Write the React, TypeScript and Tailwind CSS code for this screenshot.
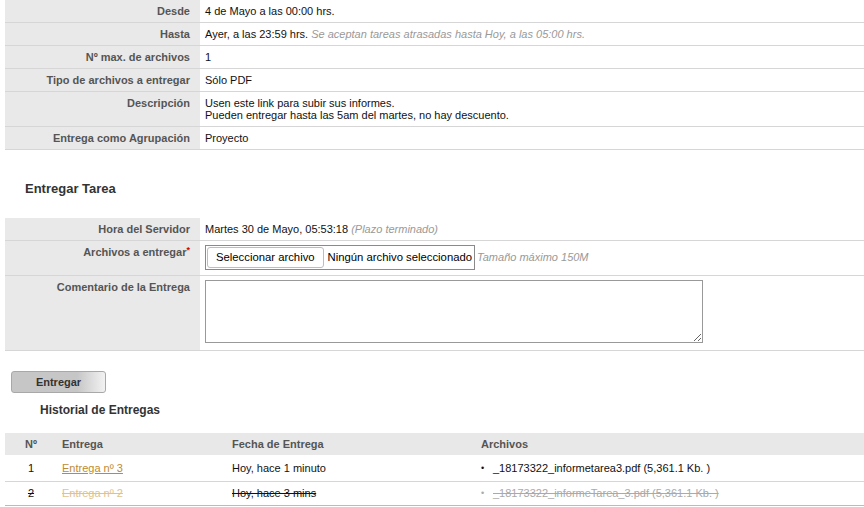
import React from "react";

const font = { fontFamily: '"Liberation Sans", Arial, sans-serif' };

function InfoRow({ label, children }: { label: string; children: React.ReactNode }) {
  return (
    <div className="flex border-b border-[#d6d6d6]">
      <div className="w-[195px] shrink-0 bg-[#e9e9e9] text-right pr-[10px] pt-[5px] pb-[4px] font-bold text-[#555]">
        {label}
      </div>
      <div className="flex-1 pl-[5px] pt-[5px] pb-[4px] text-[#111]">{children}</div>
    </div>
  );
}

export default function App() {
  return (
    <div className="w-[864px] h-[507px] overflow-hidden bg-white text-[11px] leading-[13px]" style={font}>
      <div className="pl-[5px]">
        <InfoRow label="Desde">4 de Mayo a las 00:00 hrs.</InfoRow>
        <InfoRow label="Hasta">
          Ayer, a las 23:59 hrs.{" "}
          <i className="text-[#999]">Se aceptan tareas atrasadas hasta Hoy, a las 05:00 hrs.</i>
        </InfoRow>
        <InfoRow label="Nº max. de archivos">1</InfoRow>
        <InfoRow label="Tipo de archivos a entregar">Sólo PDF</InfoRow>
        <div className="flex border-b border-[#d6d6d6]">
          <div className="w-[195px] shrink-0 bg-[#e9e9e9] text-right pr-[10px] pt-[5px] pb-[5px] font-bold text-[#555]">
            Descripción
          </div>
          <div className="flex-1 pl-[5px] pt-[5px] pb-[5px] leading-[12px] text-[#111]">
            Usen este link para subir sus informes.
            <br />
            Pueden entregar hasta las 5am del martes, no hay descuento.
          </div>
        </div>
        <InfoRow label="Entrega como Agrupación">Proyecto</InfoRow>
      </div>

      <h2 className="pl-[25px] pt-[31px] pb-[21px] text-[13px] leading-[16px] font-bold text-[#333]">Entregar Tarea</h2>

      <div className="pl-[5px]">
        <InfoRow label="Hora del Servidor">
          Martes 30 de Mayo, 05:53:18 <i className="text-[#999]">(Plazo terminado)</i>
        </InfoRow>
        <div className="flex border-b border-[#d6d6d6]">
          <div className="w-[195px] shrink-0 bg-[#e9e9e9] text-right pr-[10px] pt-[5px] font-bold text-[#555]">
            Archivos a entregar<span className="text-[#d00] align-top text-[9px] leading-[9px]">*</span>
          </div>
          <div className="flex-1 h-[34px] pl-[5px] pt-[4px] flex items-start">
            <div className="h-[25px] border border-[#8a8a8a] flex items-center pl-[1px] pr-[2px] text-[11.3px] text-black whitespace-nowrap">
              <span className="h-[21px] px-[8px] border border-[#bdbdbd] rounded-[3px] bg-white flex items-center">
                Seleccionar archivo
              </span>
              <span className="pl-[4px]">Ningún archivo seleccionado</span>
            </div>
            <i className="pl-[2px] pt-[6px] text-[#999] whitespace-nowrap">Tamaño máximo 150M</i>
          </div>
        </div>
        <div className="flex border-b border-[#d6d6d6]">
          <div className="w-[195px] shrink-0 bg-[#e9e9e9] text-right pr-[10px] pt-[5px] font-bold text-[#555]">
            Comentario de la Entrega
          </div>
          <div className="flex-1 h-[74px] pl-[5px] pt-[4px]">
            <textarea className="block w-[498px] h-[63px] border border-[#999] bg-white" />
          </div>
        </div>
      </div>

      <div className="pl-[11px] pt-[20px]">
        <button className="w-[95px] h-[22px] rounded-[3px] border border-[#a8a8a8] bg-[linear-gradient(to_right,#c6c6c6_70%,#f2f2f2)] font-bold text-[#333] text-[11px]">
          Entregar
        </button>
      </div>

      <h3 className="pl-[40px] pt-[10px] pb-[16px] text-[12px] leading-[14px] font-bold text-[#333]">Historial de Entregas</h3>

      <div className="pl-[5px]">
        <div className="flex h-[22px] items-center bg-[#e8e8e8] font-bold text-[#555]">
          <div className="w-[52px] text-center">Nº</div>
          <div className="w-[170px] pl-[5px]">Entrega</div>
          <div className="w-[249px] pl-[5px]">Fecha de Entrega</div>
          <div className="pl-[5px]">Archivos</div>
        </div>
        <div className="flex h-[27px] items-center border-b border-[#d6d6d6] text-[#111]">
          <div className="w-[52px] text-center">1</div>
          <div className="w-[170px] pl-[5px]">
            <a href="#" className="text-[#c08a30] underline">Entrega nº 3</a>
          </div>
          <div className="w-[249px] pl-[5px]">Hoy, hace 1 minuto</div>
          <div className="pl-[5px] flex items-center">
            <span className="w-[12px] text-[9px]">•</span>
            <span>_18173322_informetarea3.pdf (5,361.1 Kb. )</span>
          </div>
        </div>
        <div className="flex h-[24px] items-center border-b border-[#bbb] text-[#111]">
          <div className="w-[52px] text-center line-through">2</div>
          <div className="w-[170px] pl-[5px]">
            <a href="#" className="text-[#dfc38f] line-through">Entrega nº 2</a>
          </div>
          <div className="w-[249px] pl-[5px] line-through">Hoy, hace 3 mins</div>
          <div className="pl-[5px] flex items-center text-[#aaa]">
            <span className="w-[12px] text-[9px]">•</span>
            <span className="line-through">_18173322_informeTarea_3.pdf (5,361.1 Kb. )</span>
          </div>
        </div>
      </div>
    </div>
  );
}
